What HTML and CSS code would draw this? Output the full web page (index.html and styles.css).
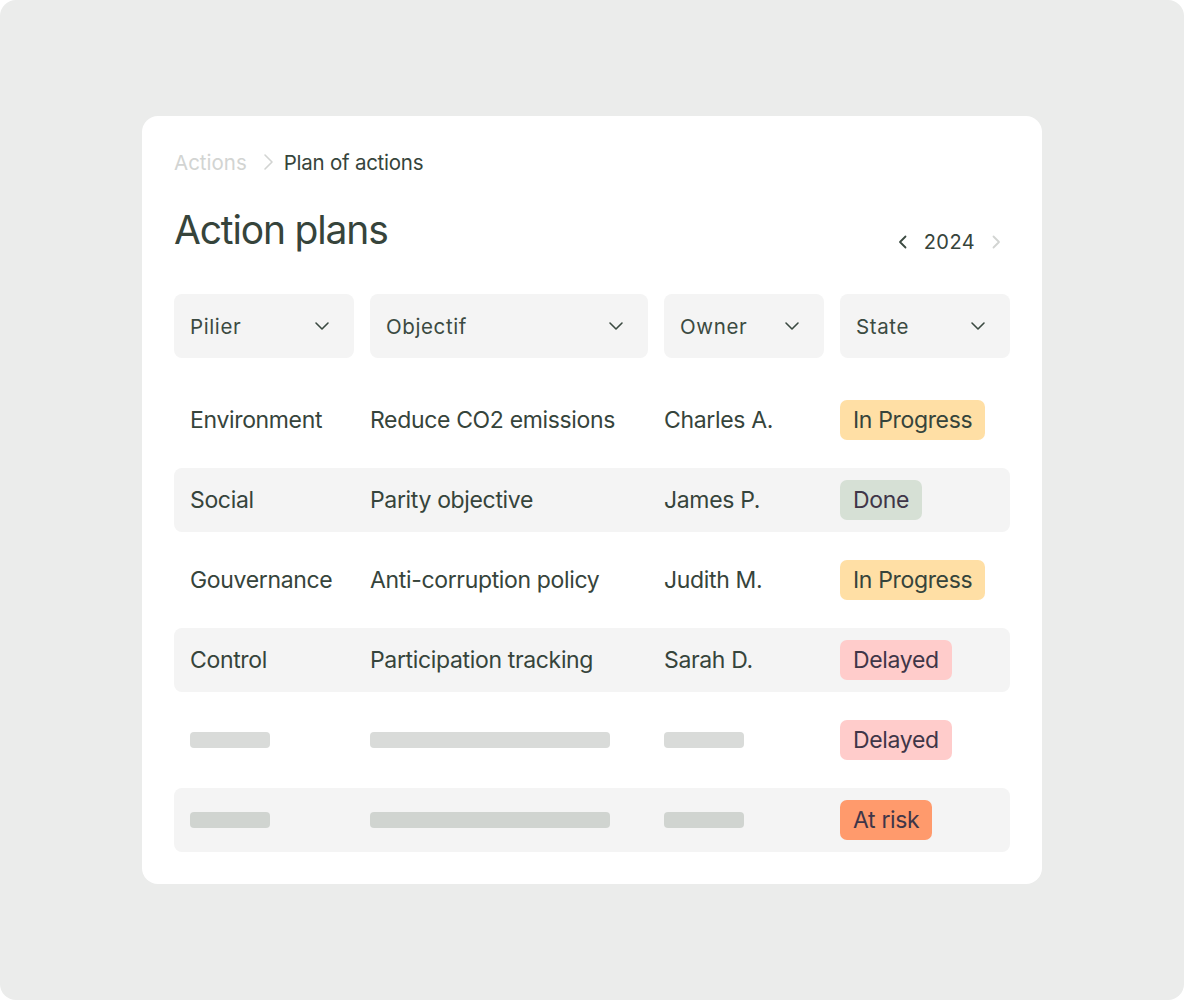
FILE: index.html
```html
<!DOCTYPE html>
<html lang="en">
<head>
<meta charset="utf-8">
<title>Action plans</title>
<link rel="stylesheet" href="styles.css">
</head>
<body>
<div class="stage">
  <div class="card">
    <nav class="crumbs">
      <span class="crumb-muted">Actions</span>
      <svg class="crumb-sep" width="14" height="18" viewBox="0 0 14 18"><path d="M4 2 L11 9 L4 16" fill="none" stroke="#d2d4d2" stroke-width="1.6" stroke-linecap="round" stroke-linejoin="round"/></svg>
      <span class="crumb-current">Plan of actions</span>
    </nav>
    <header class="head">
      <h1 class="title">Action plans</h1>
      <div class="year">
        <svg width="12" height="16" viewBox="0 0 12 16"><path d="M8.5 2.5 L3 8 L8.5 13.5" fill="none" stroke="#3b4a41" stroke-width="1.8" stroke-linecap="round" stroke-linejoin="round"/></svg>
        <span class="year-val">2024</span>
        <svg width="12" height="16" viewBox="0 0 12 16"><path d="M3.5 2.5 L9 8 L3.5 13.5" fill="none" stroke="#d2d4d2" stroke-width="1.8" stroke-linecap="round" stroke-linejoin="round"/></svg>
      </div>
    </header>
    <div class="grid filters">
      <div class="filter"><span>Pilier</span><svg width="16" height="10" viewBox="0 0 16 10"><path d="M2 2 L8 8 L14 2" fill="none" stroke="#3b4a41" stroke-width="1.6" stroke-linecap="round" stroke-linejoin="round"/></svg></div>
      <div class="filter"><span>Objectif</span><svg width="16" height="10" viewBox="0 0 16 10"><path d="M2 2 L8 8 L14 2" fill="none" stroke="#3b4a41" stroke-width="1.6" stroke-linecap="round" stroke-linejoin="round"/></svg></div>
      <div class="filter"><span>Owner</span><svg width="16" height="10" viewBox="0 0 16 10"><path d="M2 2 L8 8 L14 2" fill="none" stroke="#3b4a41" stroke-width="1.6" stroke-linecap="round" stroke-linejoin="round"/></svg></div>
      <div class="filter"><span>State</span><svg width="16" height="10" viewBox="0 0 16 10"><path d="M2 2 L8 8 L14 2" fill="none" stroke="#3b4a41" stroke-width="1.6" stroke-linecap="round" stroke-linejoin="round"/></svg></div>
    </div>
    <div class="rows">
      <div class="grid row">
        <div class="cell first">Environment</div>
        <div class="cell">Reduce CO2 emissions</div>
        <div class="cell">Charles A.</div>
        <div class="cell"><span class="badge progress">In Progress</span></div>
      </div>
      <div class="grid row alt">
        <div class="cell first">Social</div>
        <div class="cell">Parity objective</div>
        <div class="cell">James P.</div>
        <div class="cell"><span class="badge done">Done</span></div>
      </div>
      <div class="grid row">
        <div class="cell first">Gouvernance</div>
        <div class="cell">Anti-corruption policy</div>
        <div class="cell">Judith M.</div>
        <div class="cell"><span class="badge progress">In Progress</span></div>
      </div>
      <div class="grid row alt">
        <div class="cell first">Control</div>
        <div class="cell">Participation tracking</div>
        <div class="cell">Sarah D.</div>
        <div class="cell"><span class="badge delayed">Delayed</span></div>
      </div>
      <div class="grid row">
        <div class="cell first"><span class="skel short"></span></div>
        <div class="cell"><span class="skel long"></span></div>
        <div class="cell"><span class="skel short"></span></div>
        <div class="cell"><span class="badge delayed">Delayed</span></div>
      </div>
      <div class="grid row alt">
        <div class="cell first"><span class="skel short"></span></div>
        <div class="cell"><span class="skel long"></span></div>
        <div class="cell"><span class="skel short"></span></div>
        <div class="cell"><span class="badge risk">At risk</span></div>
      </div>
    </div>
  </div>
</div>
</body>
</html>
```

FILE: styles.css
```css
* { box-sizing: border-box; }
html, body { margin: 0; padding: 0; background: #ffffff; }
body { font-family: Inter, "Noto Sans", sans-serif; color: #3b4a41; }

.stage {
  width: 1184px;
  height: 1000px;
  background: #ebeceb;
  border-radius: 16px;
  padding: 116px 142px;
}

.card {
  width: 900px;
  height: 768px;
  background: #ffffff;
  border-radius: 16px;
  padding: 32px;
}

.crumbs {
  display: flex;
  align-items: center;
  height: 28px;
  font-size: 20.5px;
  letter-spacing: 0;
}
.crumb-muted { color: #d2d4d2; }
.crumb-sep { margin: 0 9px 0 14px; }
.crumb-current { color: #36443b; letter-spacing: -0.012em; }

.head {
  display: flex;
  justify-content: space-between;
  align-items: flex-start;
  margin-top: 31px;
  height: 87px;
}
.title {
  margin: 0;
  font-size: 39px;
  font-weight: 400;
  letter-spacing: -0.03em;
  line-height: 46px;
  color: #36443b;
}
.year {
  display: flex;
  align-items: center;
  margin-top: 22px;
  margin-right: 8px;
  gap: 15px;
  font-size: 20px;
  height: 26px;
}
.year-val { color: #36443b; letter-spacing: 0.02em; }

.grid {
  display: grid;
  grid-template-columns: 180px 278px 160px 170px;
  column-gap: 16px;
}

.filter {
  height: 64px;
  background: #f4f4f4;
  border-radius: 8px;
  display: flex;
  align-items: center;
  justify-content: space-between;
  padding: 0 24px 0 16px;
  font-size: 20.5px;
  letter-spacing: 0.03em;
  color: #3b4a41;
}

.rows {
  margin-top: 30px;
  display: flex;
  flex-direction: column;
  gap: 16px;
}
.row {
  height: 64px;
  border-radius: 8px;
  align-items: center;
  font-size: 23px;
  letter-spacing: -0.015em;
  color: #36443b;
}
.row.alt { background: #f4f4f4; }
.cell { display: flex; align-items: center; white-space: nowrap; }
.cell.first { padding-left: 16px; }

.badge {
  display: inline-flex;
  align-items: center;
  height: 40px;
  padding: 0 13px;
  border-radius: 7px;
  font-size: 23px;
  letter-spacing: -0.015em;
}
.badge.progress { background: #ffdfa5; color: #36443b; }
.badge.done { background: #d6e0d5; color: #3f3648; }
.badge.delayed { background: #ffcccb; color: #3f3648; }
.badge.risk { background: #ff9a6c; color: #3f3648; }

.skel {
  display: block;
  height: 16px;
  border-radius: 4px;
  background: #d9dbd9;
}
.row.alt .skel { background: #d0d4d0; }
.skel.short { width: 80px; }
.skel.long { width: 240px; }
```
